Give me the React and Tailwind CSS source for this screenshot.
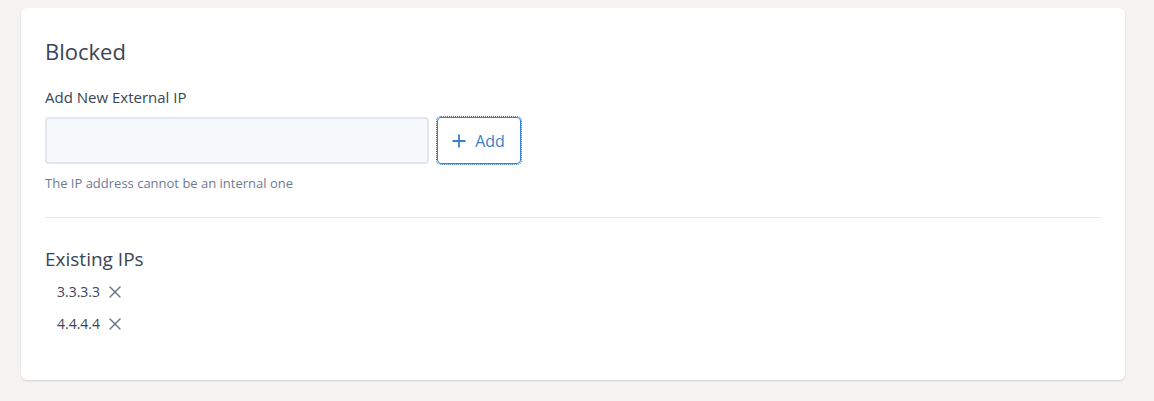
import React from "react";
import { Plus, X } from "lucide-react";

const ips = ["3.3.3.3", "4.4.4.4"];

export default function App() {
  return (
    <div
      className="min-h-[401px] bg-[#f4f3f1] pt-2 pl-[21px] pr-[29px] pb-[21px]"
      style={{ fontFamily: "'Open Sans', 'Noto Sans', sans-serif" }}
    >
      <div className="bg-white rounded-md shadow-[0_1px_2px_rgba(0,0,0,0.14)] px-6 pt-[29px] pb-[46px] text-[#3a4557]">
        <h2 className="text-[22px] leading-7 font-normal">Blocked</h2>

        <label className="block mt-[22px] text-[15px] leading-5">Add New External IP</label>
        <div className="flex gap-2 mt-[10px]">
          <input
            type="text"
            className="w-[384px] h-[47px] rounded bg-[#f5f9fc] border-2 border-[#e1e7ef] outline-none px-3"
          />
          <button
            type="button"
            className="h-[47px] w-[84px] flex items-center justify-center gap-[6px] rounded border border-[#3a83cf] outline-1 outline-dotted outline-[#2b6fc0] text-[#3a80c9] text-[16px]"
          >
            <Plus className="w-5 h-5 -ml-1" strokeWidth={2.2} />
            <span>Add</span>
          </button>
        </div>
        <p className="mt-[11px] text-[13px] leading-4 text-[#6e7c91]">The IP address cannot be an internal one</p>

        <div className="mt-[26px] border-t border-[#e3e6ea]" />

        <h3 className="mt-[29px] text-[19px] leading-6">Existing IPs</h3>
        <ul className="mt-[11px] pl-3 flex flex-col gap-[12px]">
          {ips.map((ip) => (
            <li key={ip} className="flex items-center gap-[5px] text-[14px] leading-5">
              <span>{ip}</span>
              <X className="w-[20px] h-[20px] text-[#6b7585]" strokeWidth={1.7} />
            </li>
          ))}
        </ul>
      </div>
    </div>
  );
}
